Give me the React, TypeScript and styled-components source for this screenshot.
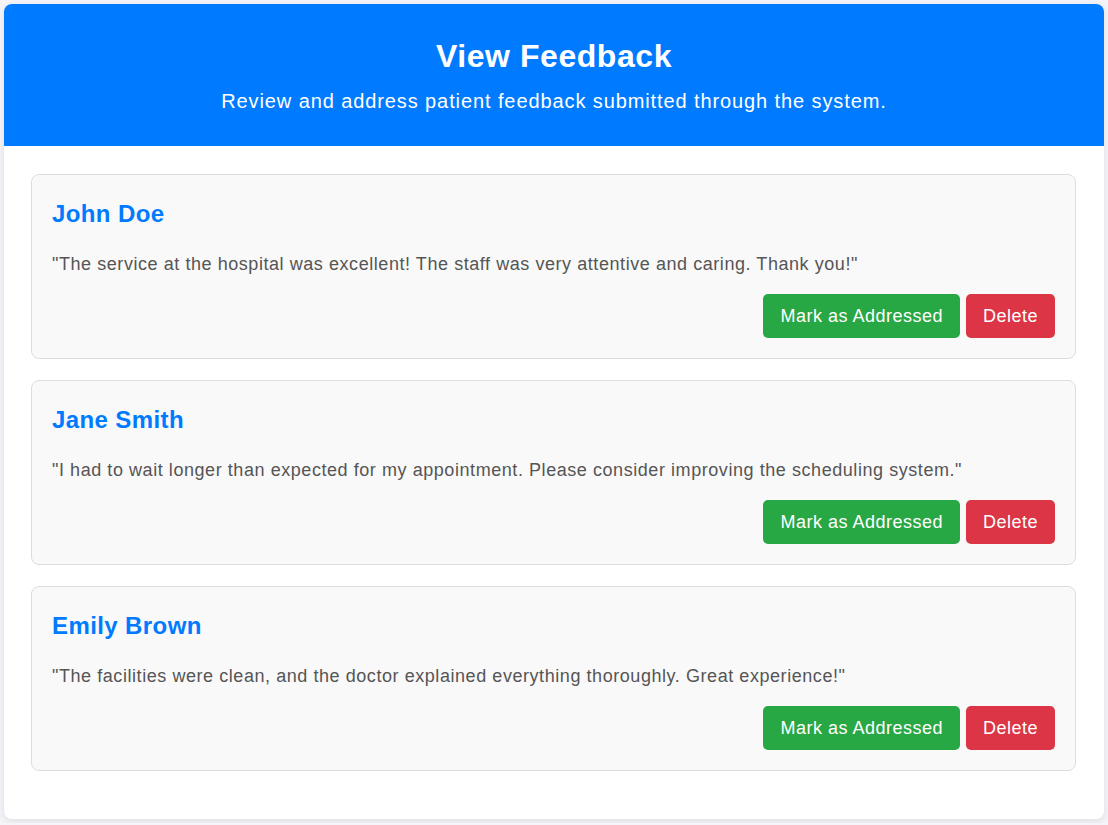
import React from "react";
import styled, { createGlobalStyle } from "styled-components";

const GlobalStyle = createGlobalStyle`
  html, body { margin: 0; padding: 0; }
  body {
    background: #f4f4f9;
    font-family: "Liberation Sans", Arial, sans-serif;
    padding: 4px;
  }
`;

const Container = styled.div`
  width: 1100px;
  background: #ffffff;
  border-radius: 8px;
  box-shadow: 0 2px 8px rgba(0, 0, 0, 0.1);
  overflow: hidden;
`;

const Header = styled.header`
  background: #007bff;
  color: #ffffff;
  text-align: center;
  padding: 34px 20px 33px;
`;

const Title = styled.h1`
  margin: 0 0 15px;
  font-size: 32px;
  font-weight: bold;
  line-height: 37px;
  letter-spacing: 0.55px;
`;

const Subtitle = styled.p`
  margin: 0;
  font-size: 20px;
  line-height: 23px;
  letter-spacing: 0.9px;
`;

const Content = styled.main`
  padding: 28px 28px 48px 27px;
  display: flex;
  flex-direction: column;
  gap: 21px;
`;

const Card = styled.section`
  background: #f9f9f9;
  border: 1px solid #dddddd;
  border-radius: 8px;
  padding: 20px;
`;

const Name = styled.h2`
  margin: 5px 0 0;
  color: #007bff;
  font-size: 24px;
  font-weight: bold;
  line-height: 28px;
  letter-spacing: 0.4px;
`;

const Quote = styled.p`
  margin: 26px 0 0;
  color: #555555;
  font-size: 18px;
  line-height: 20px;
  letter-spacing: 0.56px;
`;

const Actions = styled.div`
  display: flex;
  justify-content: flex-end;
  gap: 6px;
  margin-top: 20px;
`;

const Button = styled.button<{ $variant: "success" | "danger" }>`
  border: none;
  border-radius: 5px;
  color: #ffffff;
  font-family: "Liberation Sans", Arial, sans-serif;
  font-size: 18px;
  letter-spacing: 0.5px;
  height: 44px;
  padding: 0 17px;
  cursor: pointer;
  background: ${(p) => (p.$variant === "success" ? "#28a745" : "#dc3545")};
`;

const feedback = [
  {
    name: "John Doe",
    text: '"The service at the hospital was excellent! The staff was very attentive and caring. Thank you!"',
  },
  {
    name: "Jane Smith",
    text: '"I had to wait longer than expected for my appointment. Please consider improving the scheduling system."',
  },
  {
    name: "Emily Brown",
    text: '"The facilities were clean, and the doctor explained everything thoroughly. Great experience!"',
  },
];

export default function App() {
  return (
    <>
      <GlobalStyle />
      <Container>
        <Header>
          <Title>View Feedback</Title>
          <Subtitle>Review and address patient feedback submitted through the system.</Subtitle>
        </Header>
        <Content>
          {feedback.map((f) => (
            <Card key={f.name}>
              <Name>{f.name}</Name>
              <Quote>{f.text}</Quote>
              <Actions>
                <Button $variant="success">Mark as Addressed</Button>
                <Button $variant="danger">Delete</Button>
              </Actions>
            </Card>
          ))}
        </Content>
      </Container>
    </>
  );
}
